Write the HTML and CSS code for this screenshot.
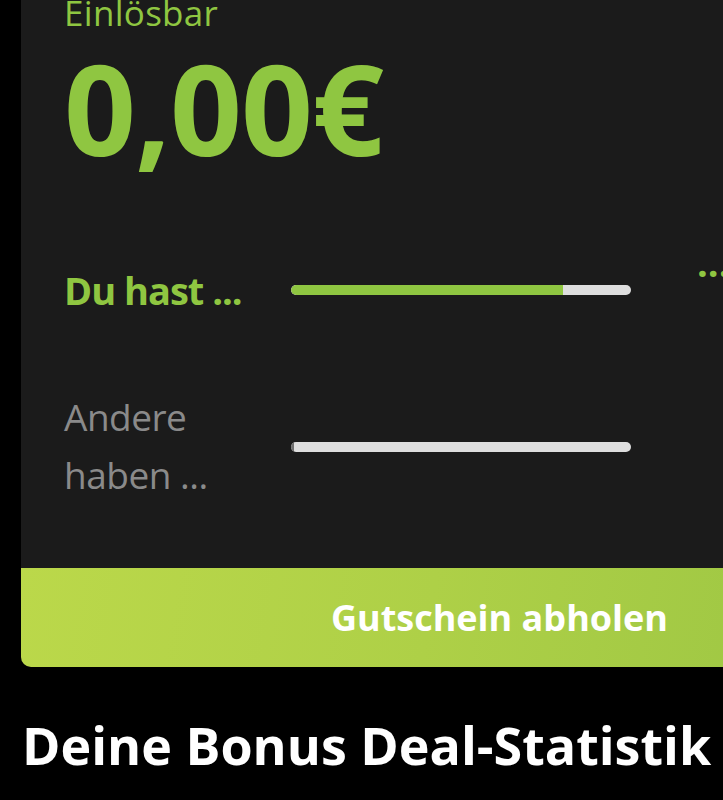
FILE: index.html
```html
<!DOCTYPE html>
<html lang="de">

<head>
  <meta charset="UTF-8">
  <meta name="viewport" content="width=device-width, initial-scale=1.0">
  <title>Bonus Deal</title>
  <link rel="stylesheet" href="styles.css">
</head>

<body>
  <div class="card">
    <div class="card-body">
      <div class="redeem-label">Einlösbar</div>
      <div class="amount">0,00€</div>

      <div class="stat-row stat-row-you">
        <div class="stat-label">Du hast ...</div>
        <div class="bar">
          <div class="bar-fill" style="width: 80%;"></div>
        </div>
        <div class="stat-more">...</div>
      </div>

      <div class="stat-row stat-row-others">
        <div class="stat-label">Andere<br>haben ...</div>
        <div class="bar">
          <div class="bar-fill bar-fill-empty" style="width: 1%;"></div>
        </div>
      </div>
    </div>

    <button class="redeem-button">Gutschein abholen</button>
  </div>

  <h2 class="section-title">Deine Bonus Deal-Statistik</h2>
</body>

</html>
```

FILE: styles.css
```css
* {
  margin: 0;
  padding: 0;
  box-sizing: border-box;
}

html,
body {
  overflow: hidden;
}

body {
  font-family: 'Open Sans', 'Liberation Sans', sans-serif;
  background: #000;
  color: #fff;
  min-height: 100vh;
}

.card {
  margin-left: 21px;
  width: 740px;
  background: #1b1b1b;
  border-bottom-left-radius: 10px;
  overflow: hidden;
  display: flex;
  flex-direction: column;
}

.card-body {
  padding: 0 0 62px 43px;
}

.redeem-label {
  font-size: 35px;
  line-height: 44px;
  margin-top: -9px;
  letter-spacing: 0.3px;
  color: #8fc641;
}

.amount {
  font-size: 126px;
  line-height: 126px;
  font-weight: 700;
  letter-spacing: -1px;
  color: #8fc641;
  margin-top: 9px;
}

.stat-row {
  display: flex;
  align-items: center;
}

.stat-row-you {
  margin-top: 94px;
}

.stat-row-others {
  margin-top: 72px;
}

.stat-label {
  flex: none;
  width: 227px;
}

.stat-row-you .stat-label {
  font-size: 38px;
  line-height: 52px;
  font-weight: 700;
  letter-spacing: -1px;
  color: #8fc641;
}

.stat-row-others .stat-label {
  font-size: 37px;
  line-height: 58px;
  font-weight: 400;
  letter-spacing: -0.5px;
  color: #8a8a8a;
  padding-bottom: 2px;
}

.bar {
  flex: none;
  width: 340px;
  height: 10px;
  border-radius: 5px;
  background: #dedede;
  overflow: hidden;
}

.bar-fill {
  height: 100%;
  background: #8fc641;
  border-radius: 5px 0 0 5px;
}

.bar-fill-empty {
  background: #6e6e6e;
}

.stat-more {
  align-self: flex-start;
  margin-left: 66px;
  margin-top: -28px;
  font-size: 38px;
  line-height: 52px;
  font-weight: 700;
  color: #8fc641;
}

.redeem-button {
  height: 99px;
  border: none;
  background: linear-gradient(100deg, #bbd84a 0%, #aed047 55%, #a0c844 100%);
  color: #fff;
  font-family: inherit;
  font-size: 36px;
  font-weight: 700;
  text-align: right;
  padding-right: 93px;
}

.section-title {
  margin-top: 42px;
  padding-left: 22px;
  font-size: 52px;
  line-height: 72px;
  font-weight: 700;
  white-space: nowrap;
}
```
